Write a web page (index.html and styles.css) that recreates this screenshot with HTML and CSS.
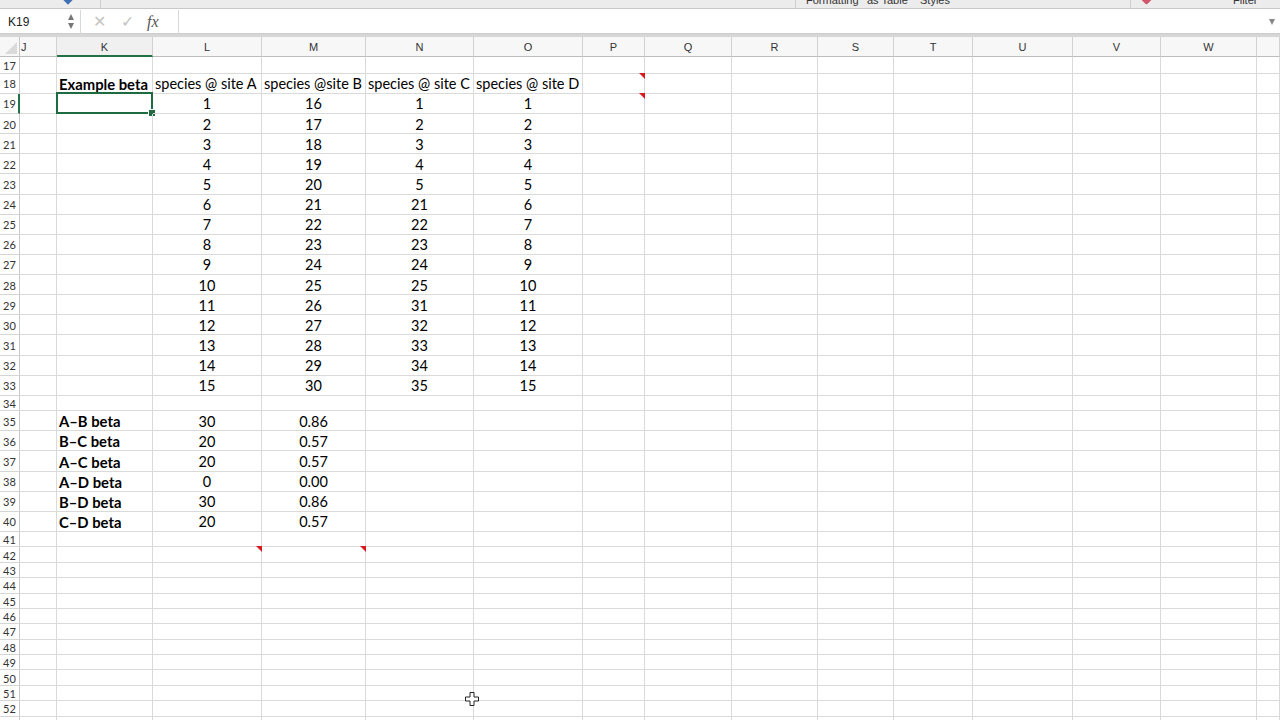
FILE: index.html
```html
<!DOCTYPE html>
<html>
<head>
<meta charset="utf-8">
<link rel="stylesheet" href="styles.css">
</head>
<body>
<div class="ribbon">
  <span class="rb-diamond"></span>
  <span class="rb-sep rb-s1"></span>
  <span class="rb-sep rb-s2"></span>
  <span class="rb-txt rb-t1">Formatting</span>
  <span class="rb-txt rb-t2">as Table</span>
  <span class="rb-txt rb-t3">Styles</span>
  <span class="rb-sep rb-s3"></span>
  <span class="rb-red"></span>
  <span class="rb-txt rb-t4">Filter</span>
</div>
<div class="fbar">
  <div class="namebox">K19</div>
  <div class="spin"><span class="up"></span><span class="dn"></span></div>
  <div class="fsep"></div>
  <div class="ficon fx-x">✕</div>
  <div class="ficon fx-ok">✓</div>
  <div class="fx">fx</div>
  <div class="fsep"></div>
  <div class="finput"></div>
  <div class="fdrop"></div>
</div>
<div class="band"></div>
<div class="sheet">
  <div class="r hdr"><span class="corner"></span><span class="ch">J</span><span class="ch sel">K</span><span class="ch ctr">L</span><span class="ch ctr">M</span><span class="ch ctr">N</span><span class="ch ctr">O</span><span class="ch ctr">P</span><span class="ch ctr">Q</span><span class="ch ctr">R</span><span class="ch ctr">S</span><span class="ch ctr">T</span><span class="ch ctr">U</span><span class="ch ctr">V</span><span class="ch ctr">W</span><span class="ch"></span></div>
  <div class="r r17"><span class="h">17</span><span class="c"></span><span class="c"></span><span class="c"></span><span class="c"></span><span class="c"></span><span class="c"></span><span class="c"></span><span class="c"></span><span class="c"></span><span class="c"></span><span class="c"></span><span class="c"></span><span class="c"></span><span class="c"></span><span class="c"></span></div>
  <div class="r t"><span class="h">18</span><span class="c"></span><span class="c b">Example beta</span><span class="c">species @ site A</span><span class="c">species @site B</span><span class="c">species @ site C</span><span class="c">species @ site D</span><span class="c"><span class="note"></span></span><span class="c"></span><span class="c"></span><span class="c"></span><span class="c"></span><span class="c"></span><span class="c"></span><span class="c"></span><span class="c"></span></div>
  <div class="r t"><span class="h hsel">19</span><span class="c"></span><span class="c"><span class="selbox"><span class="handle"></span></span></span><span class="c n">1</span><span class="c n">16</span><span class="c n">1</span><span class="c n">1</span><span class="c"><span class="note"></span></span><span class="c"></span><span class="c"></span><span class="c"></span><span class="c"></span><span class="c"></span><span class="c"></span><span class="c"></span><span class="c"></span></div>
  <div class="r t"><span class="h">20</span><span class="c"></span><span class="c"></span><span class="c n">2</span><span class="c n">17</span><span class="c n">2</span><span class="c n">2</span><span class="c"></span><span class="c"></span><span class="c"></span><span class="c"></span><span class="c"></span><span class="c"></span><span class="c"></span><span class="c"></span><span class="c"></span></div>
  <div class="r t"><span class="h">21</span><span class="c"></span><span class="c"></span><span class="c n">3</span><span class="c n">18</span><span class="c n">3</span><span class="c n">3</span><span class="c"></span><span class="c"></span><span class="c"></span><span class="c"></span><span class="c"></span><span class="c"></span><span class="c"></span><span class="c"></span><span class="c"></span></div>
  <div class="r t"><span class="h">22</span><span class="c"></span><span class="c"></span><span class="c n">4</span><span class="c n">19</span><span class="c n">4</span><span class="c n">4</span><span class="c"></span><span class="c"></span><span class="c"></span><span class="c"></span><span class="c"></span><span class="c"></span><span class="c"></span><span class="c"></span><span class="c"></span></div>
  <div class="r t"><span class="h">23</span><span class="c"></span><span class="c"></span><span class="c n">5</span><span class="c n">20</span><span class="c n">5</span><span class="c n">5</span><span class="c"></span><span class="c"></span><span class="c"></span><span class="c"></span><span class="c"></span><span class="c"></span><span class="c"></span><span class="c"></span><span class="c"></span></div>
  <div class="r t"><span class="h">24</span><span class="c"></span><span class="c"></span><span class="c n">6</span><span class="c n">21</span><span class="c n">21</span><span class="c n">6</span><span class="c"></span><span class="c"></span><span class="c"></span><span class="c"></span><span class="c"></span><span class="c"></span><span class="c"></span><span class="c"></span><span class="c"></span></div>
  <div class="r t"><span class="h">25</span><span class="c"></span><span class="c"></span><span class="c n">7</span><span class="c n">22</span><span class="c n">22</span><span class="c n">7</span><span class="c"></span><span class="c"></span><span class="c"></span><span class="c"></span><span class="c"></span><span class="c"></span><span class="c"></span><span class="c"></span><span class="c"></span></div>
  <div class="r t"><span class="h">26</span><span class="c"></span><span class="c"></span><span class="c n">8</span><span class="c n">23</span><span class="c n">23</span><span class="c n">8</span><span class="c"></span><span class="c"></span><span class="c"></span><span class="c"></span><span class="c"></span><span class="c"></span><span class="c"></span><span class="c"></span><span class="c"></span></div>
  <div class="r t"><span class="h">27</span><span class="c"></span><span class="c"></span><span class="c n">9</span><span class="c n">24</span><span class="c n">24</span><span class="c n">9</span><span class="c"></span><span class="c"></span><span class="c"></span><span class="c"></span><span class="c"></span><span class="c"></span><span class="c"></span><span class="c"></span><span class="c"></span></div>
  <div class="r t"><span class="h">28</span><span class="c"></span><span class="c"></span><span class="c n">10</span><span class="c n">25</span><span class="c n">25</span><span class="c n">10</span><span class="c"></span><span class="c"></span><span class="c"></span><span class="c"></span><span class="c"></span><span class="c"></span><span class="c"></span><span class="c"></span><span class="c"></span></div>
  <div class="r t"><span class="h">29</span><span class="c"></span><span class="c"></span><span class="c n">11</span><span class="c n">26</span><span class="c n">31</span><span class="c n">11</span><span class="c"></span><span class="c"></span><span class="c"></span><span class="c"></span><span class="c"></span><span class="c"></span><span class="c"></span><span class="c"></span><span class="c"></span></div>
  <div class="r t"><span class="h">30</span><span class="c"></span><span class="c"></span><span class="c n">12</span><span class="c n">27</span><span class="c n">32</span><span class="c n">12</span><span class="c"></span><span class="c"></span><span class="c"></span><span class="c"></span><span class="c"></span><span class="c"></span><span class="c"></span><span class="c"></span><span class="c"></span></div>
  <div class="r t"><span class="h">31</span><span class="c"></span><span class="c"></span><span class="c n">13</span><span class="c n">28</span><span class="c n">33</span><span class="c n">13</span><span class="c"></span><span class="c"></span><span class="c"></span><span class="c"></span><span class="c"></span><span class="c"></span><span class="c"></span><span class="c"></span><span class="c"></span></div>
  <div class="r t"><span class="h">32</span><span class="c"></span><span class="c"></span><span class="c n">14</span><span class="c n">29</span><span class="c n">34</span><span class="c n">14</span><span class="c"></span><span class="c"></span><span class="c"></span><span class="c"></span><span class="c"></span><span class="c"></span><span class="c"></span><span class="c"></span><span class="c"></span></div>
  <div class="r t"><span class="h">33</span><span class="c"></span><span class="c"></span><span class="c n">15</span><span class="c n">30</span><span class="c n">35</span><span class="c n">15</span><span class="c"></span><span class="c"></span><span class="c"></span><span class="c"></span><span class="c"></span><span class="c"></span><span class="c"></span><span class="c"></span><span class="c"></span></div>
  <div class="r"><span class="h">34</span><span class="c"></span><span class="c"></span><span class="c"></span><span class="c"></span><span class="c"></span><span class="c"></span><span class="c"></span><span class="c"></span><span class="c"></span><span class="c"></span><span class="c"></span><span class="c"></span><span class="c"></span><span class="c"></span><span class="c"></span></div>
  <div class="r t"><span class="h">35</span><span class="c"></span><span class="c b">A–B beta</span><span class="c n">30</span><span class="c n">0.86</span><span class="c"></span><span class="c"></span><span class="c"></span><span class="c"></span><span class="c"></span><span class="c"></span><span class="c"></span><span class="c"></span><span class="c"></span><span class="c"></span><span class="c"></span></div>
  <div class="r t"><span class="h">36</span><span class="c"></span><span class="c b">B–C beta</span><span class="c n">20</span><span class="c n">0.57</span><span class="c"></span><span class="c"></span><span class="c"></span><span class="c"></span><span class="c"></span><span class="c"></span><span class="c"></span><span class="c"></span><span class="c"></span><span class="c"></span><span class="c"></span></div>
  <div class="r t"><span class="h">37</span><span class="c"></span><span class="c b">A–C beta</span><span class="c n">20</span><span class="c n">0.57</span><span class="c"></span><span class="c"></span><span class="c"></span><span class="c"></span><span class="c"></span><span class="c"></span><span class="c"></span><span class="c"></span><span class="c"></span><span class="c"></span><span class="c"></span></div>
  <div class="r t"><span class="h">38</span><span class="c"></span><span class="c b">A–D beta</span><span class="c n">0</span><span class="c n">0.00</span><span class="c"></span><span class="c"></span><span class="c"></span><span class="c"></span><span class="c"></span><span class="c"></span><span class="c"></span><span class="c"></span><span class="c"></span><span class="c"></span><span class="c"></span></div>
  <div class="r t"><span class="h">39</span><span class="c"></span><span class="c b">B–D beta</span><span class="c n">30</span><span class="c n">0.86</span><span class="c"></span><span class="c"></span><span class="c"></span><span class="c"></span><span class="c"></span><span class="c"></span><span class="c"></span><span class="c"></span><span class="c"></span><span class="c"></span><span class="c"></span></div>
  <div class="r t"><span class="h">40</span><span class="c"></span><span class="c b">C–D beta</span><span class="c n">20</span><span class="c n">0.57</span><span class="c"></span><span class="c"></span><span class="c"></span><span class="c"></span><span class="c"></span><span class="c"></span><span class="c"></span><span class="c"></span><span class="c"></span><span class="c"></span><span class="c"></span></div>
  <div class="r"><span class="h">41</span><span class="c"></span><span class="c"></span><span class="c"></span><span class="c"></span><span class="c"></span><span class="c"></span><span class="c"></span><span class="c"></span><span class="c"></span><span class="c"></span><span class="c"></span><span class="c"></span><span class="c"></span><span class="c"></span><span class="c"></span></div>
  <div class="r"><span class="h">42</span><span class="c"></span><span class="c"></span><span class="c"><span class="note"></span></span><span class="c"><span class="note"></span></span><span class="c"></span><span class="c"></span><span class="c"></span><span class="c"></span><span class="c"></span><span class="c"></span><span class="c"></span><span class="c"></span><span class="c"></span><span class="c"></span><span class="c"></span></div>
  <div class="r"><span class="h">43</span><span class="c"></span><span class="c"></span><span class="c"></span><span class="c"></span><span class="c"></span><span class="c"></span><span class="c"></span><span class="c"></span><span class="c"></span><span class="c"></span><span class="c"></span><span class="c"></span><span class="c"></span><span class="c"></span><span class="c"></span></div>
  <div class="r"><span class="h">44</span><span class="c"></span><span class="c"></span><span class="c"></span><span class="c"></span><span class="c"></span><span class="c"></span><span class="c"></span><span class="c"></span><span class="c"></span><span class="c"></span><span class="c"></span><span class="c"></span><span class="c"></span><span class="c"></span><span class="c"></span></div>
  <div class="r"><span class="h">45</span><span class="c"></span><span class="c"></span><span class="c"></span><span class="c"></span><span class="c"></span><span class="c"></span><span class="c"></span><span class="c"></span><span class="c"></span><span class="c"></span><span class="c"></span><span class="c"></span><span class="c"></span><span class="c"></span><span class="c"></span></div>
  <div class="r"><span class="h">46</span><span class="c"></span><span class="c"></span><span class="c"></span><span class="c"></span><span class="c"></span><span class="c"></span><span class="c"></span><span class="c"></span><span class="c"></span><span class="c"></span><span class="c"></span><span class="c"></span><span class="c"></span><span class="c"></span><span class="c"></span></div>
  <div class="r"><span class="h">47</span><span class="c"></span><span class="c"></span><span class="c"></span><span class="c"></span><span class="c"></span><span class="c"></span><span class="c"></span><span class="c"></span><span class="c"></span><span class="c"></span><span class="c"></span><span class="c"></span><span class="c"></span><span class="c"></span><span class="c"></span></div>
  <div class="r"><span class="h">48</span><span class="c"></span><span class="c"></span><span class="c"></span><span class="c"></span><span class="c"></span><span class="c"></span><span class="c"></span><span class="c"></span><span class="c"></span><span class="c"></span><span class="c"></span><span class="c"></span><span class="c"></span><span class="c"></span><span class="c"></span></div>
  <div class="r"><span class="h">49</span><span class="c"></span><span class="c"></span><span class="c"></span><span class="c"></span><span class="c"></span><span class="c"></span><span class="c"></span><span class="c"></span><span class="c"></span><span class="c"></span><span class="c"></span><span class="c"></span><span class="c"></span><span class="c"></span><span class="c"></span></div>
  <div class="r"><span class="h">50</span><span class="c"></span><span class="c"></span><span class="c"></span><span class="c"></span><span class="c"></span><span class="c"></span><span class="c"></span><span class="c"></span><span class="c"></span><span class="c"></span><span class="c"></span><span class="c"></span><span class="c"></span><span class="c"></span><span class="c"></span></div>
  <div class="r"><span class="h">51</span><span class="c"></span><span class="c"></span><span class="c"></span><span class="c"></span><span class="c"></span><span class="c"></span><span class="c"></span><span class="c"></span><span class="c"></span><span class="c"></span><span class="c"></span><span class="c"></span><span class="c"></span><span class="c"></span><span class="c"></span></div>
  <div class="r"><span class="h">52</span><span class="c"></span><span class="c"></span><span class="c"></span><span class="c"></span><span class="c"></span><span class="c"></span><span class="c"></span><span class="c"></span><span class="c"></span><span class="c"></span><span class="c"></span><span class="c"></span><span class="c"></span><span class="c"></span><span class="c"></span></div>
  <div class="r"><span class="h">53</span><span class="c"></span><span class="c"></span><span class="c"></span><span class="c"></span><span class="c"></span><span class="c"></span><span class="c"></span><span class="c"></span><span class="c"></span><span class="c"></span><span class="c"></span><span class="c"></span><span class="c"></span><span class="c"></span><span class="c"></span></div>
  <svg class="cursor" width="14" height="14" viewBox="0 0 14 14"><path d="M5 0.5H9V5H13.5V9H9V13.5H5V9H0.5V5H5Z" fill="#fff" stroke="#222" stroke-width="1"/></svg>
</div>
</body>
</html>
```

FILE: styles.css
```css
* { box-sizing: border-box; }
html, body { margin: 0; padding: 0; }
body {
  width: 1280px;
  height: 720px;
  overflow: hidden;
  background: #fff;
  font-family: Lato, "Open Sans", sans-serif;
  color: #000;
}

/* ribbon remnant */
.ribbon {
  position: relative;
  height: 9px;
  background: #ececec;
  border-bottom: 1px solid #c8c8c8;
  overflow: hidden;
  font-family: "Liberation Sans", sans-serif;
  font-size: 11px;
  color: #333;
}
.rb-sep { position: absolute; top: 0; width: 1px; height: 8px; background: #cfcfcf; }
.rb-s1 { left: 100px; }
.rb-s2 { left: 795px; }
.rb-s3 { left: 1130px; }
.rb-txt { position: absolute; top: -6px; line-height: 12px; white-space: nowrap; }
.rb-t1 { left: 806px; }
.rb-t2 { left: 867px; }
.rb-t3 { left: 920px; }
.rb-t4 { left: 1233px; }
.rb-diamond { position: absolute; left: 64px; top: -5px; width: 8px; height: 8px; background: #3f6fb5; transform: rotate(45deg); }
.rb-red { position: absolute; left: 1142px; top: -6px; width: 9px; height: 9px; background: #d2566b; transform: rotate(45deg); border-radius: 2px; }

/* formula bar */
.fbar {
  display: flex;
  align-items: center;
  height: 24px;
  background: #fff;
  font-family: "Liberation Sans", sans-serif;
  padding-top: 1px;
}
.namebox { width: 62px; padding-left: 8px; font-size: 12px; color: #222; }
.spin { width: 18px; display: flex; flex-direction: column; align-items: center; gap: 3px; }
.spin .up { width: 0; height: 0; border-left: 3.5px solid transparent; border-right: 3.5px solid transparent; border-bottom: 6px solid #777; }
.spin .dn { width: 0; height: 0; border-left: 3.5px solid transparent; border-right: 3.5px solid transparent; border-top: 6px solid #777; }
.fsep { width: 1px; height: 24px; background: #d8d8d8; }
.ficon { color: #c4c4c4; font-size: 16px; width: 28px; text-align: center; }
.fx-x { margin-left: 4px; }
.fx { font-family: "Liberation Serif", serif; font-style: italic; font-size: 16px; color: #555; width: 37px; padding-left: 6px; }
.finput { flex: 1; }
.fdrop { width: 0; height: 0; border-left: 3.5px solid transparent; border-right: 3.5px solid transparent; border-top: 6px solid #888; margin-right: 5px; }

.band {
  height: 4px;
  background: #d6d6d6;
  border-top: 1px solid #cdcdcd;
}

/* sheet */
.sheet { position: relative; }
.r {
  display: grid;
  grid-template-columns: 20px 37px 96px 109px 104px 108px 109px 62px 87px 86px 76px 79px 100px 88px 96px 1fr;
  height: 15.4px;
}
.r.t { height: 20.14px; }
.r.r17 { height: 16.8px; }
.r.hdr { height: 20px; background: #f7f7f7; }

.ch {
  border-right: 1px solid #d2d2d2;
  border-bottom: 1px solid #bdbdbd;
  font-family: "Liberation Sans", sans-serif;
  font-size: 11px;
  color: #333;
  line-height: 20px;
  padding-left: 1px;
  overflow: hidden;
}
.ch.ctr, .ch.sel { text-align: center; padding-left: 0; }
.ch.sel { border-bottom: 2px solid #217346; background: #f0f0f0; }
.corner {
  position: relative;
  border-right: 1px solid #c8c8c8;
  border-bottom: 1px solid #bdbdbd;
  background: #f7f7f7;
}
.corner::after {
  content: "";
  position: absolute;
  right: 2px;
  bottom: 2px;
  width: 0; height: 0;
  border-left: 12px solid transparent;
  border-bottom: 12px solid #dadada;
}

.h {
  border-right: 1px solid #c8c8c8;
  border-bottom: 1px solid #d6d6d6;
  font-family: Lato, sans-serif;
  font-size: 11px;
  color: #333;
  padding-left: 3px;
  padding-top: 1px;
  display: flex;
  align-items: center;
  background: #fff;
}
.h.hsel { border-right: 2px solid #217346; }

.c {
  position: relative;
  border-right: 1px solid #dadada;
  border-bottom: 1px solid #dadada;
  font-size: 14.5px;
  white-space: nowrap;
  display: flex;
  align-items: center;
  padding-left: 2px;
  padding-top: 1px;
}
.c.n { justify-content: center; padding-left: 0; }
.c.b { font-weight: 700; font-size: 14.8px; }

.note {
  position: absolute;
  top: -1px;
  right: -1px;
  width: 0; height: 0;
  border-left: 6px solid transparent;
  border-top: 6px solid #d71920;
}

.selbox {
  position: absolute;
  left: -1px;
  top: -2px;
  right: -1px;
  bottom: -1px;
  border: 2px solid #1e6b41;
}
.handle {
  position: absolute;
  right: -5px;
  bottom: -5px;
  width: 8px;
  height: 8px;
  background: #1e6b41;
  border: 1px solid #fff;
}

.cursor { position: absolute; left: 465px; top: 655px; }
```
